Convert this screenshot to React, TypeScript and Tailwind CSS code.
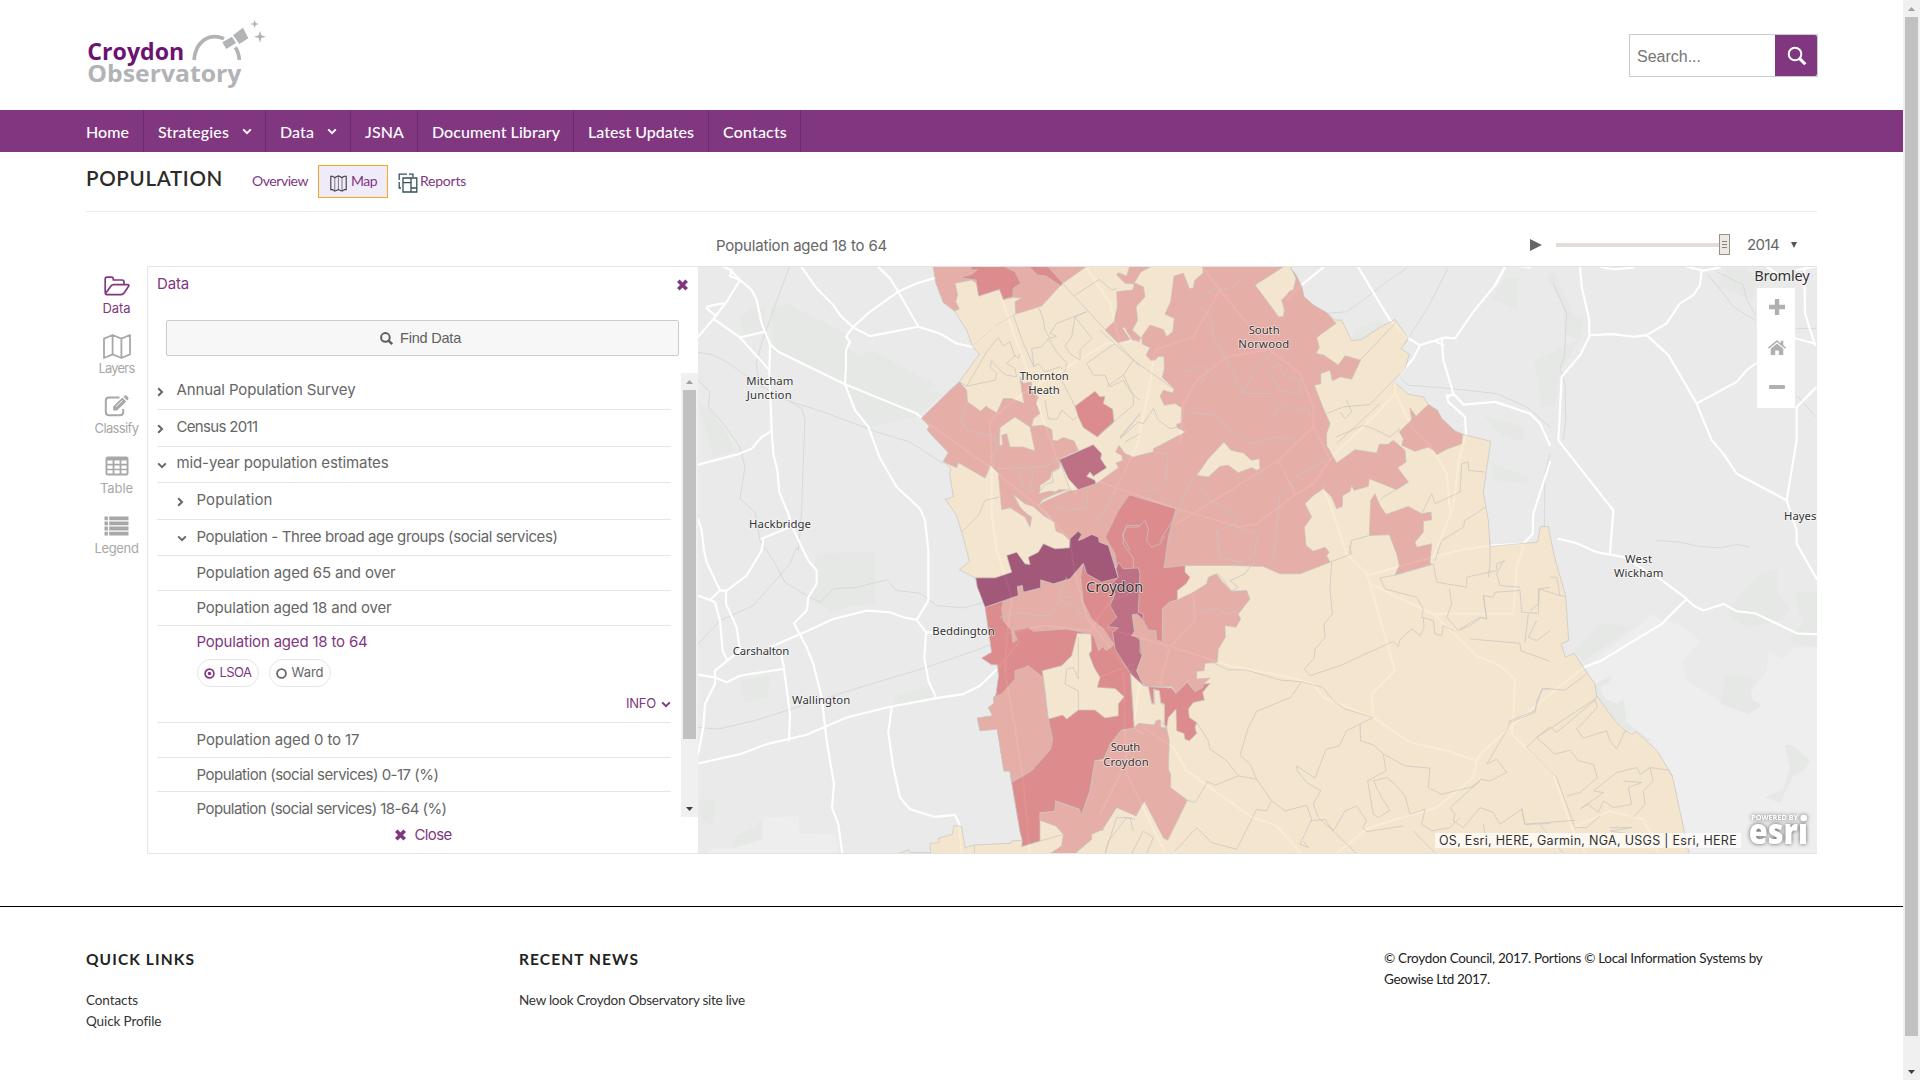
import React, { useLayoutEffect, useRef, useState } from "react";

/* Text set to a fixed measure: the tracking is computed from the natural width. */
function Fit({ w, className = "", children }: { w: number; className?: string; children: string }) {
  const ref = useRef<HTMLSpanElement>(null);
  const [ls, setLs] = useState(0);
  useLayoutEffect(() => {
    const el = ref.current;
    if (!el) return;
    const natural = el.getBoundingClientRect().width - ls * children.length;
    setLs((w - natural) / children.length);
  }, []);
  return (
    <span ref={ref} className={`inline-block whitespace-nowrap ${className}`} style={{ letterSpacing: `${ls}px` }}>
      {children}
    </span>
  );
}

/* ---------- map geometry ---------- */
/* Each path is a list of runs "tile x,y x,y ..." joined by "|"; tiles have their own origin. */
const ORIGIN: Record<string, [number, number]> = {
  "4": [4200, 0],
  "5": [2070, 660],
  "6": [3300, 780],
  "7": [2070, 1620],
  "8": [3300, 1620],
  "9": [4380, 1620],
};

function toPath(src: string, close: boolean) {
  const pts: string[] = [];
  src.split("|").forEach((run) => {
    const parts = run.trim().split(/\s+/);
    const [ox, oy] = ORIGIN[parts[0]];
    parts.slice(1).forEach((p) => {
      const [x, y] = p.split(",").map(Number);
      pts.push(`${x + ox} ${y + oy}`);
    });
  });
  return "M" + pts.join("L") + (close ? "Z" : "");
}

const PALE = "#eeeeee";
const PARK = "#e5e8e4";
const CREAM = "#f8e4c4";
const LIGHT = "#e4978c";
const MID = "#d86868";
const PLUM = "#ae435e";
const DARK = "#86214f";

const ground: [string, string][] = [
  [PALE, "9 375,378 580,220 600,240 660,250 720,300 670,360 680,420 780,480 870,460 920,390 925,330 965,355 1005,320 1080,320 1080,950 690,950 637,705 500,570"],
  [PALE, "7 24,960 70,920 135,922 215,895 220,830 325,825 330,878 435,880 450,960"],
  [PARK, "5 245,265 290,250 430,320 465,340 468,380 510,410 545,390 740,495 720,510 760,520 680,590 530,622 465,495 250,390"],
  [PARK, "5 150,290 190,262 225,265 225,310 215,335 160,345"],
  [PARK, "5 24,545 60,570 90,610 115,650 135,690 70,710"],
  [PARK, "7 375,60 385,38 555,33 555,190 480,195 430,215 360,180 375,120"],
  [PARK, "7 150,420 240,405 230,470 165,485"],
  [PARK, "7 610,492 620,465 730,435 730,478"],
  [PARK, "7 24,775 75,775 75,820 65,850 40,840"],
  [PARK, "7 135,885 190,860 215,835 218,895 130,920"],
  [PARK, "9 800,220 810,195 900,100 950,85 950,150 990,205 960,240 860,262"],
  [PARK, "9 1005,155 1080,155 1080,320 985,300 1030,250 1010,190"],
  [PARK, "9 795,405 865,405 890,420 872,445 875,475 905,495 865,520 780,490"],
  [PARK, "9 345,330 420,247 510,258 490,280 370,360"],
  [PARK, "9 975,612 1000,615 1050,660 1030,690 1000,705 960,785 915,770 970,745 990,680 980,640"],
  [PARK, "9 410,465 405,430 455,405 450,425 420,440 430,470 470,490 490,475 500,545 575,600 560,600 528,573 496,570"],
  [PARK, "4 275,895 320,830 355,835 350,930"],
  [PARK, "4 402,1080 540,1020 482,1110 465,1215 420,1220 418,1160"],
  [PARK, "4 440,830 460,810 520,945 550,950 545,1020 495,1000 490,920"],
  [PARK, "4 950,860 980,805 1040,805 1067,845 1060,900"],
  [PARK, "6 755,240 760,210 830,180 860,190 800,235"],
  [PARK, "6 1155,470 1240,490 1270,530 1200,525"],
  [PARK, "6 1175,610 1290,650 1285,670 1185,660"],
  [PARK, "4 255,1245 300,1260 370,1280 375,1320 340,1320"],
];

const rails: string[] = [
  "5 298,141 250,270 215,370 198,430 205,470",
  "5 24,397 65,403 110,425 200,490 290,540 400,575 560,635 660,665 760,730",
  "5 300,545 335,565 345,600 340,720 335,870 325,990|7 320,20 300,70 190,195 90,240 24,310",
  "5 24,480 60,515 55,560 100,610 150,680 165,740 150,835 195,875 210,960|7 250,60 285,125 350,165 390,185 430,145 500,140 590,118 620,150 690,158 740,195 820,202 885,185",
  "7 24,560 85,565 200,538 350,490 500,443 700,383 840,335 910,310",
  "6 1045,22 985,140 915,250",
  "6 680,160 740,155 790,120 860,65 920,25",
  "6 900,350 925,375 1050,385 1190,400 1280,440 1350,500",
  "6 1350,580 1335,640 1333,800",
  "4 460,850 500,940 493,1070 480,1105 495,1150 497,1260 490,1320",
  "4 920,820 970,880 1000,920 1067,962",
  "4 950,815 1030,855 1040,900 1067,945",
  "4 1190,1185 1247,1250",
  "4 1190,985 1247,985",
  "9 590,0 660,5 720,18 780,22 830,12 870,20",
];

const roads: string[] = [
  "5 24,350 70,297 110,245 150,180 120,168 125,150 85,135",
  "5 120,150 150,180 185,210 200,240 215,310 240,372 265,395 465,492 680,580 718,612 900,740 1060,870 1140,960",
  "5 240,372 238,455 245,630 250,700 262,750 268,815 295,880 300,905 340,990|7 355,60 380,90 380,130 355,170 350,210 312,248 350,320 370,370 395,470 410,600 432,730 426,800 445,850 458,945",
  "5 24,733 140,703 185,685 215,650 245,632",
  "5 72,297 150,352 238,450",
  "5 100,250 55,258 50,265 75,285",
  "5 150,352 222,335",
  "5 330,135 380,205 430,255 450,285 490,322 540,348 685,320",
  "5 565,141 600,175 625,215 685,320 750,340 800,370 845,380 920,315 970,285",
  "5 740,172 680,190 625,215 540,275 490,320 468,350 480,365 468,390 468,440 465,492 495,570 535,620 568,710 620,800 690,865 705,900 715,990|7 715,180 680,238 708,275 703,350 715,420 738,470",
  "5 24,895 35,930 42,990|7 50,65 90,150 110,150 170,105 215,30 220,0 215,-5|5 300,920 300,890",
  "5 930,215 950,280 985,380 1020,470 1060,600 1110,740 1160,820",
  "5 900,600 905,740 905,880 920,990|7 940,90 965,170 950,300 945,400 975,560 1000,720 1020,945",
  "5 1350,360 1250,370 1150,430 1000,520 900,600",
  "5 1190,145 1260,250 1290,370",
  "7 24,165 60,178 90,150",
  "7 60,178 75,185 90,240 98,330 112,360 75,390 75,430 45,490 40,560 24,640",
  "7 108,152 108,190 140,260 150,330 112,360",
  "7 240,320 350,272 430,235 530,210 600,215 640,230 680,238",
  "7 24,402 75,410 110,425 150,405 278,385",
  "7 270,330 280,370 300,520 297,598",
  "7 24,668 150,640 230,610 350,582 470,530 600,498 740,472 820,460 870,435 922,385 990,300",
  "7 605,500 595,575 610,680 630,770 660,805 735,828 795,822 808,850 815,945",
  "7 708,275 760,275",
  "7 1140,0 1155,100 1190,230 1290,360 1350,420|8 100,560 130,580",
  "7 945,280 1060,255 1200,270 1260,180 1350,150",
  "6 560,120 605,75 670,22",
  "6 775,22 870,180 925,235 960,255 1035,232 1065,235 1120,155 1190,70 1215,22",
  "6 960,255 940,295 885,360 885,400 840,450 700,585 640,670 590,700 470,790 420,800 230,745 0,665",
  "6 1005,243 1030,255",
  "6 1025,235 1030,300 1060,400 1090,433 1185,425 1290,460 1320,490 1350,555",
  "6 1060,405 1040,405 1045,425 1095,470 1098,520 1075,610 1060,740 1000,890",
  "6 885,395 935,500 990,555 1040,640 1050,750",
  "6 1350,605 1300,760 1298,820 1270,850 1170,855 1100,865 1000,890 800,945",
  "6 310,25 360,90 450,200 510,270 600,340 640,440 640,500 690,595",
  "6 360,90 280,230 165,270 150,370 110,560 40,700",
  "6 500,270 380,290 290,360 250,430 240,550",
  "6 640,500 535,600 390,690 230,790",
  "6 535,600 585,700",
  "6 670,680 700,760 740,880|8 800,100 810,130 885,390 815,460 820,530 930,605 1040,630 1130,660 1140,640 1230,560 1350,460|9 375,378 420,362 605,250 680,175",
  "8 1130,660 1120,710 1010,800 870,840 800,865 700,945",
  "8 810,130 1000,220 1130,345 1200,375 1245,415 1240,530 1235,580 1350,690|9 280,700 335,860 380,945",
  "8 1000,220 1240,220 1250,80 1270,20",
  "8 0,260 100,285 280,340 400,378 550,405 640,430 670,470 820,530",
  "8 130,560 220,620 260,690 330,740 450,825 530,855 610,945",
  "8 280,165 285,240 210,320 180,430",
  "8 70,400 80,700 200,945",
  "8 0,820 60,700",
  "8 0,410 100,370",
  "9 335,860 450,810 550,835 600,945",
  "4 315,800 285,855",
  "4 340,797 390,802",
  "4 540,800 545,860 568,960 568,1010 540,1065 485,1130 475,1320|9 460,-90 450,40",
  "4 570,1005 640,1002 700,1010 740,1005 800,970 840,910 880,885 900,855 905,810",
  "4 600,800 640,808 700,803",
  "4 860,800 910,812 960,802",
  "4 740,1005 805,1065 890,1210 935,1320|9 790,-260 830,-200 980,-120 1010,-30 1010,10 1070,115",
  "4 890,1210 1010,1145 1040,1110 1067,1090",
  "4 1247,1163 1190,1220 1190,1320|9 1000,-240 980,-120",
  "4 1100,800 1130,820",
  "4 1213,800 1215,940 1245,1035",
  "4 1188,1015 1245,1030",
  "4 1190,810 1247,800",
  "4 160,1180 145,1190",
  "9 295,-5 350,8 410,35 490,50 600,115 680,175 700,195 730,210 790,190 830,212 885,218 1010,278 1080,282",
];

const borough =
  "5 730,130 730,141 738,190 760,247 795,275 830,330 847,378 868,402 808,485 775,515 780,518 694,594 718,617 712,630 775,697 760,724 783,745 779,760 790,829 766,837 800,885 815,935 830,990|7 838,63 808,88 857,112 862,140 885,185 905,335 875,352 905,372 922,372 926,405 918,463 911,470 912,488 895,500 908,525 862,532 870,570 922,565 942,690 960,690 990,872 997,898 965,900 963,907 853,912 825,920 815,857 792,853 787,880 745,892 747,905 720,907 722,935 660,935 657,926 625,938 600,970|9 700,970 688,940 637,705 593,632 560,600 528,573 515,580 496,570 465,540 410,465 405,430 380,395 343,338 316,350 304,310 326,300 317,165 285,55 272,-5|6 1345,798 1322,798 1312,845 1170,858 1165,780 1150,695 1172,543 1088,522 1065,512 1025,475 1012,450 985,433 970,410 925,402 883,365 915,325 928,282 903,266 925,235 885,178 835,205 785,238 755,242 725,180 705,180 680,158 640,135 612,110 605,80 588,45 570,22 570,0";

const areas: [string, string][] = [
  [CREAM, borough],
  [LIGHT, "5 730,130 730,141 738,190 760,247 795,273 808,266 797,245 803,225 795,190 845,180 860,190 866,228 928,208 940,238 968,232 995,234 975,245 977,282 1055,258 1115,192 1187,141 1200,130"],
  [MID, "5 838,130 845,150 862,150 845,163 810,173 858,180 866,228 928,208 940,238 968,230 970,205 992,190 975,155 945,141 945,130"],
  [MID, "5 1008,130 1042,165 1068,168 1113,198 1117,188 1070,135"],
  [LIGHT, "6 152,12 150,22 123,35 103,68 130,80 135,110 108,140 113,180 97,210 122,232 118,245 97,240 72,200 68,205 90,238 55,248 15,210 42,185 52,140 50,95 75,92 98,90 103,72 75,70 50,45 55,38 80,48 88,22 90,12"],
  [LIGHT, "6 305,12 310,38 283,62 280,85 268,85 250,40 222,48 212,125 195,162 223,175 218,215 200,230 190,208 150,195 125,230 127,252 150,262 138,285 152,300 165,300 175,288 192,290 193,325 187,352 222,385 218,398 190,390 180,408 193,435 225,430 245,442 243,488 230,492 232,503 257,515 160,565 160,575 130,582 100,590 75,580 57,555 47,575 65,585 68,600 48,608 55,622 0,662|5 1217,790 1165,808 1135,812 1060,845 1045,855 1092,905 1098,932 1118,940 1140,962|7 1140,60 1300,80|6 88,703 228,745 205,830 192,922 255,915 400,915 490,918 540,940 600,940 690,905 680,885 688,875 675,860 640,872 618,855 613,800 635,770 615,730 640,705 670,685 695,710 710,745 727,738 728,705 750,693 755,675 762,690 805,678 808,655 890,688 925,665 893,622 918,605 915,570 880,540 865,552 838,552 830,578 765,568 710,608 680,555 680,520 690,490 668,440 643,375 663,370 662,340 690,330 697,362 722,350 755,357 782,300 735,287 715,315 672,285 648,280 658,262 650,232 708,190 680,158 640,135 612,110 605,80 588,45 570,22 570,12"],
  [CREAM, "6 572,12 548,22 465,75 525,155 535,170 550,170 553,150 545,120 560,105 570,92 580,90 588,55 572,22"],
  [CREAM, "6 372,545 393,570 430,578 455,600 478,595 480,625 470,630 455,622 415,637 385,615 360,618 325,650 290,645 325,595"],
  [LIGHT, "6 885,943 898,915 890,880 868,823 808,825 812,720 825,700 840,735 858,762 925,738 965,760 993,755 995,778 970,782 970,815 945,845 950,860 995,850 990,905 995,912"],
  [LIGHT, "6 985,433 1012,450 1025,475 1065,512 1088,522 1085,550 1040,567 1010,583 1003,573 985,560 945,573 905,555 910,535 898,515 935,478 930,443 948,468"],
  [LIGHT, "5 808,485 830,510 833,545 872,573 888,558 920,578 940,535 965,535 1003,550 995,510 990,470 1000,490 1025,485 1025,510 1045,530 1038,550 1050,580 1030,595 1025,618 1060,615 1085,628 1088,660 1100,662 1120,652 1152,662 1165,690 1110,715 1110,740 1085,755 1080,775 1050,795 1050,818 1110,800 1130,808 1060,835 1045,855 1092,905 1060,885 1030,858 1005,850 970,822 990,860 1010,880 1025,890 1020,920 1005,890 960,862 935,868 925,760 902,735 885,773 805,727 800,742 760,724 775,697 712,630 718,617 694,594 775,515"],
  [CREAM, "5 930,622 975,590 1020,620 1035,692 1000,680 960,680 950,640 935,645 938,675 928,675"],
  [CREAM, "5 1045,820 1065,792 1090,785 1085,758 1115,740 1140,808 1105,808 1085,825 1060,838 1100,815 1080,812"],
  [MID, "5 1155,558 1215,513 1230,530 1245,528 1240,550 1268,567 1272,605 1222,650 1180,622 1165,590"],
  [PLUM, "5 1108,718 1210,673 1235,700 1232,715 1250,742 1210,768 1200,755 1190,768 1215,780 1217,790 1165,808 1135,775"],
  [MID, "6 88,703 228,745 205,830 192,922 255,915|8 255,80 255,95 270,110 258,130 232,150 232,178 208,185 188,205 187,307 125,345 130,435 92,400 103,563 65,568|7 1270,600 1240,655 1215,660 1200,750 1175,822 1165,825 1168,805 1097,780 1095,812 1050,815 1050,900 995,917 997,898 990,872 965,725 960,690 942,690 918,540 911,470 918,463 926,405 922,372 905,372 875,352 905,335 885,200 985,165 1140,115 1180,68 1285,112 1275,40 1246,-10 1285,-90"],
  [LIGHT, "7 911,470 935,460 975,415 975,390 1000,382 1015,375 1060,410 1065,465 1075,535 1088,595 1082,625 1025,690 965,725 960,690 942,690 922,565 870,570 862,532 908,525 895,500 912,488"],
  [LIGHT, "7 935,205 940,183 985,165 982,138 997,135 1000,155 1052,142 1052,118 1090,130 1140,115 1178,72 1172,110 1180,185 1205,235 1240,265 1272,312 1248,330 1240,318 1225,330 1215,295 1205,280 1130,265 1030,272 1015,260 970,270 982,298 968,305 965,270 940,240"],
  [CREAM, "7 1162,278 1203,280 1205,330 1197,340 1212,380 1230,410 1222,440 1275,443 1302,468 1285,490 1285,525 1245,532 1215,508 1165,508 1130,535 1118,523 1075,535 1065,450 1057,390 1115,375 1145,345"],
  [DARK, "7 857,112 915,112 965,95 950,45 980,35 1005,70 1020,72 1015,50 1045,35 1060,10 1095,25 1138,22 1140,-5 1165,-28 1175,-18 1165,0 1180,-5 1205,-18 1225,-10 1228,5 1255,15 1285,112 1235,125 1190,100 1180,68 1140,115 1090,130 1052,118 1052,142 1000,155 997,135 982,138 985,165 885,200 862,140"],
  [PLUM, "8 55,65 70,85 115,82 120,100 115,215 130,220 128,238 97,225 105,285 120,300 120,335 127,345 110,390 130,435 92,400 45,325 38,275 55,262 22,258 50,230 30,195 45,160 35,130 55,110 48,85"],
  [LIGHT, "8 97,222 112,220 130,240 145,268 168,270 170,298 187,303 187,205 208,185 232,178 280,155 320,130 325,110 350,100 365,122 395,152 440,150 450,175 415,220 422,235 408,260 375,255 376,290 355,325 352,365 315,368 312,390 290,392 290,415 330,412 310,430 308,440 285,453 262,422 230,458 215,438 135,437 110,390 127,345 120,290 95,285 105,270"],
  [MID, "8 145,438 215,442 228,458 262,424 285,453 308,440 310,430 330,428 308,455 313,478 280,485 265,505 268,530 290,545 285,560 290,578 268,600 255,595 252,578 230,570 228,505 205,530 200,560 193,550 193,490 182,485 178,450 160,445 162,490 155,485"],
  [CREAM, "8 92,400 130,435 145,438 155,490 165,490 162,447 178,450 182,488 193,493 193,550 200,562 180,537 163,553 115,548 110,560 103,555"],
  [LIGHT, "8 65,568 100,563 115,548 163,553 168,540 180,537 183,560 200,562 208,600 205,685 212,700 212,740 262,778 203,898 190,890 133,780 108,825 50,800 5,870|7 1240,865 1205,880 1205,895 1155,938 1150,950 1070,950 1080,938 1115,915 1120,880 1097,855 1050,838 1050,815 1095,812 1097,780 1168,805 1175,822 1200,750 1215,660 1240,660 1260,610 1290,572"],
];

const bounds: string[] = [
  "5 847,378 920,315 970,285 975,282",
  "5 970,285 1000,370 1032,440",
  "5 808,485 830,498 915,480 920,460 900,440 905,422 935,455 950,465 980,470 975,445 950,430 975,405 985,415 990,400",
  "5 830,498 890,395 925,352 940,378 960,365 975,410",
  "5 1048,265 1060,300 1065,330 1080,355 1100,348 1080,340 1100,310 1190,275 1155,290 1205,355 1170,390 1170,420 1140,400 1125,378 1145,350 1155,290",
  "5 1075,355 1055,380 1025,385 1032,440 1045,430 1065,455 1110,440 1125,455 1130,430 1100,395 1075,355",
  "5 1117,190 1280,365 1350,440",
  "5 1155,225 1228,178 1265,210 1280,205",
  "5 1275,370 1190,430 1210,465 1245,465 1260,500 1300,480 1325,520 1350,540",
  "5 1065,540 1075,595 1100,598 1115,570 1150,600 1160,590",
  "5 1115,480 1155,558",
  "5 1290,650 1350,580 1290,655",
  "5 833,545 812,600 830,630 915,650 920,690 900,715",
  "5 985,745 1000,800 1020,815 1030,750 990,745",
  "5 925,745 1060,740 1108,720",
  "5 815,935 865,885 885,840 928,830",
  "5 1090,855 1135,870 1190,860 1195,810",
  "5 1220,905 1250,860 1280,810",
  "5 1350,915 1310,915 1297,945 1320,990",
  "7 930,230 1000,215 1040,225 1075,225 1110,180 1155,195 1175,225",
  "7 1130,110 1105,165 1140,170",
  "7 1165,290 1165,350 1165,415 1150,380 1130,385 1125,430 1165,450 1165,510",
  "7 1050,900 1120,880",
  "7 1245,938 1255,900 1310,830 1335,835",
  "7 853,912 853,945",
  "6 0,210 60,265 100,300 220,385",
  "6 20,380 70,345 100,300",
  "6 70,345 100,405 100,435 0,520",
  "6 60,535 115,485 130,490 160,445 175,480 210,505 235,500",
  "6 75,545 120,520",
  "6 285,130 330,170 345,240 380,300 430,400 515,400",
  "6 345,85 285,130",
  "6 360,90 400,80 430,50",
  "6 240,340 310,315 330,340 290,380",
  "6 500,330 540,310 550,345 600,360 600,400 540,390 510,340",
  "6 430,400 460,340 525,270",
  "6 515,480 540,440 560,430 585,450 625,445 630,470",
  "6 265,455 350,465 380,500 450,550 535,530 580,540",
  "6 160,575 205,580 195,660 170,690 130,690",
  "6 280,650 230,760 180,840",
  "6 290,670 330,720 380,740 410,790 350,810 360,890 420,905 465,880 470,820 410,800",
  "6 520,905 540,700 600,640 690,595",
  "6 70,820 80,800 115,800 135,780 145,805 140,840 155,860 180,850 195,825",
  "6 100,922 100,895 70,850 70,820",
  "6 780,300 885,190",
  "6 680,460 730,440 810,433 900,340",
  "6 710,550 840,430",
  "6 740,420 755,455 735,475 720,455",
  "6 708,530 790,495 830,510 870,530 900,505",
  "6 925,665 850,710 840,720",
  "6 965,760 995,700 1005,730 1080,695 1085,610 1105,605 1105,630 1155,635",
  "6 1155,740 1135,755 1095,780 1090,800 1025,840 1005,900",
  "6 748,880 755,840 808,825",
  "8 690,65 755,40 748,15",
  "8 355,100 395,152 415,140 390,120 435,100 465,60",
  "8 270,190 300,215 350,205 380,220 415,212",
  "8 695,65 690,145 697,220 672,250 675,290 645,325 643,352 613,385 630,405",
  "8 340,367 385,387 440,388 540,418 605,423 668,440 700,480 735,505 820,530",
  "8 605,423 572,470 470,512 445,560 420,643 450,670 470,715 515,780 555,810 620,793 635,835",
  "8 630,405 720,375 880,302 895,318 900,298 935,265 960,285 972,262 970,230",
  "8 840,112 855,145 950,170 970,205 965,230 1000,240 1005,280 1025,285 1030,255 1060,270",
  "8 840,112 890,103 1000,70 1010,125 1100,140 1100,110 1190,90 1190,70 1215,60",
  "8 1048,145 1055,190 1040,230 1075,270 1110,255 1145,230 1160,235 1150,165 1180,170 1185,155 1260,150",
  "8 1260,150 1265,215 1315,218 1318,145 1350,140",
  "8 1110,295 1260,308 1262,330 1350,362",
  "8 1210,60 1190,100 1200,135 1260,140",
  "8 1170,0 1170,70 1165,110",
  "8 1275,305 1280,260 1285,220",
  "8 1310,240 1285,290 1310,300 1350,270",
  "8 820,530 740,570 718,615 678,625 645,712 590,675 592,690 620,725 663,750 650,770 640,790 655,830 700,870 735,810 770,795 800,840 788,860 800,872 910,855",
  "8 780,550 782,600 820,612 850,640 858,690 803,720 820,820 835,830 870,808 845,770 820,720 860,710 885,730 915,765 930,820 975,805",
  "8 850,640 915,675 990,682 985,740 1025,760 1115,738 1140,720",
  "8 290,545 325,600 330,625 380,660 415,705 470,715",
  "8 415,705 345,733 323,722 285,785 262,778",
  "8 225,930 290,860 335,905 410,925 470,805 500,810 512,782",
  "8 15,938 50,830 90,830 100,870",
  "8 95,938 130,870 160,890 140,938",
  "8 635,835 600,910 625,920 610,900",
  "8 630,840 675,835 700,870 770,938",
  "8 1350,445 1325,445 1305,510 1230,540 1225,560 1160,670 1190,655 1220,695 1170,720 1140,715",
  "8 1140,720 1050,800 1065,820 1060,840 1090,860 1140,800 1180,815 1200,850 1265,805 1275,850 1350,848",
  "8 975,805 965,850 995,870 1050,860 1080,830",
  "8 940,870 1005,935",
  "8 1150,850 1155,880 1190,885",
  "9 380,400 315,448 250,443 230,480 225,515 150,545",
  "9 405,475 230,590 200,620 290,710 345,860",
  "9 230,590 285,640 330,628 355,660 400,670 412,710 360,755 320,765",
  "9 410,465 405,478 412,500 350,565 370,592 440,570 450,600 470,625 495,570",
  "9 230,590 270,558 290,575 405,478",
  "9 185,800 195,850 345,838",
  "9 360,805 430,755 400,750 470,695 530,680 540,700 570,680 625,688 637,705",
  "9 365,800 385,790 415,815 430,780 460,800 515,790 505,740 545,725 490,720",
  "9 570,680 580,720 550,750 555,790 520,830",
  "9 345,860 380,860 420,825",
  "9 240,850 310,938",
  "9 450,860 515,860 450,870 515,880",
  "9 300,165 317,168",
  "9 270,110 290,110 300,165 235,145 235,190 210,210",
  "9 0,265 60,230 80,235 70,165",
];

type Label = { x: number; y: number; w: number; s?: number; t: string };
const labels: Label[] = [
  { x: 2239, y: 1155, w: 141, t: "Mitcham" },
  { x: 2240, y: 1195, w: 135, t: "Junction" },
  { x: 2247, y: 1583, w: 186, t: "Hackbridge" },
  { x: 3059, y: 1140, w: 147, t: "Thornton" },
  { x: 3085, y: 1181, w: 94, t: "Heath" },
  { x: 3746, y: 1001, w: 93, t: "South" },
  { x: 3715, y: 1043, w: 153, t: "Norwood" },
  { x: 2198, y: 1964, w: 170, t: "Carshalton" },
  { x: 2797, y: 1904, w: 187, t: "Beddington" },
  { x: 2376, y: 2111, w: 175, t: "Wallington" },
  { x: 3258, y: 1775, w: 172, s: 44, t: "Croydon" },
  { x: 3332, y: 2252, w: 89, t: "South" },
  { x: 3310, y: 2294, w: 136, t: "Croydon" },
  { x: 4875, y: 1688, w: 81, t: "West" },
  { x: 4842, y: 1730, w: 148, t: "Wickham" },
  { x: 5352, y: 1560, w: 97, t: "Hayes" },
  { x: 5263, y: 843, w: 166, s: 44, t: "Bromley" },
];

function MapView() {
  return (
    <svg className="block h-full w-full" viewBox="2094 801 3357 1755" preserveAspectRatio="none" fontFamily='"Noto Sans", sans-serif'>
      <rect x="2094" y="801" width="3357" height="1755" fill="#eaeaea" />
      {ground.map(([f, d], i) => (
        <path key={i} d={toPath(d, true)} fill={f} />
      ))}
      <g fill="none" stroke="#d4d5d7" strokeWidth="2.5" strokeLinejoin="round">
        {rails.map((d, i) => (
          <path key={i} d={toPath(d, false)} />
        ))}
      </g>
      <g fill="none" stroke="#ffffff" strokeWidth="6.5" strokeLinejoin="round" strokeLinecap="round">
        {roads.map((d, i) => (
          <path key={i} d={toPath(d, false)} />
        ))}
      </g>
      <g opacity="0.72" stroke="#bcb8b4" strokeWidth="2.2" strokeLinejoin="round">
        {areas.map(([f, d], i) => (
          <path key={i} d={toPath(d, true)} fill={f} />
        ))}
        <g fill="none" strokeWidth="2.2">
          {bounds.map((d, i) => (
            <path key={i} d={toPath(d, false)} />
          ))}
        </g>
      </g>
      <g fill="#333333" stroke="#ffffff" strokeOpacity="0.6" strokeWidth="5" strokeLinejoin="round" paintOrder="stroke">
        {labels.map((l, i) => (
          <text key={i} x={l.x} y={l.y} fontSize={l.s ?? 34} textLength={l.w}>
            {l.t}
          </text>
        ))}
      </g>
    </svg>
  );
}

/* ---------- icons ---------- */
function Chevron({ dir, className = "" }: { dir: "right" | "down"; className?: string }) {
  return dir === "right" ? (
    <svg className={className} width="7" height="10" viewBox="0 0 7 10" fill="none" stroke="currentColor" strokeWidth="2">
      <path d="M1.2 1.2 5 5 1.2 8.8" />
    </svg>
  ) : (
    <svg className={className} width="10" height="7" viewBox="0 0 10 7" fill="none" stroke="currentColor" strokeWidth="2">
      <path d="M1.2 1.4 5 5.2 8.8 1.4" />
    </svg>
  );
}

function Cross({ className = "" }: { className?: string }) {
  return (
    <svg className={className} width="11" height="12" viewBox="0 0 11 12" fill="none" stroke="currentColor" strokeWidth="3.6">
      <path d="M1.3 1.8 9.7 10.2M9.7 1.8 1.3 10.2" />
    </svg>
  );
}

function FolderIcon() {
  return (
    <svg width="26" height="20" viewBox="0 0 26 20" fill="none" stroke="currentColor" strokeWidth="1.7" strokeLinejoin="round">
      <path d="M1.2 16.5V3.2Q1.2 1.2 3.2 1.2H7.5Q9.3 1.2 9.3 3V4H18Q20 4 20 6V8.6" />
      <path d="M1.5 17.6 6.6 10.4Q7.8 8.7 9.8 8.7H24Q25.4 8.9 24.6 10.3L20.2 16.8Q19 18.6 17 18.6H3Q1.2 18.6 1.2 16.5" />
    </svg>
  );
}

function MapIcon() {
  return (
    <svg width="28" height="25" viewBox="0 0 28 25" fill="none" stroke="currentColor" strokeWidth="1.8" strokeLinejoin="round">
      <path d="M1 4.6 9.6 1 18.4 4.6 27 1V20.4L18.4 24 9.6 20.4 1 24ZM9.6 1V20.4M18.4 4.6V24" />
    </svg>
  );
}

function EditIcon() {
  return (
    <svg width="26" height="22" viewBox="0 0 26 22" fill="none" stroke="currentColor">
      <path d="M15.5 2.4H5Q1.8 2.4 1.8 5.6V17Q1.8 20.2 5 20.2H16Q19.2 20.2 19.2 17V14" strokeWidth="2" />
      <path d="M9.2 11.6 18.4 2.6 22.2 6.4 13 15.4H9.2Z" fill="currentColor" stroke="none" />
      <path d="M19.4 1.7 20.6.6Q21.6-.2 22.6.8L24 2.2Q25 3.2 24.2 4.2L23.2 5.4Z" fill="currentColor" stroke="none" />
      <path d="M12 11.8 18.6 5.3" stroke="#fff" strokeWidth=".9" />
    </svg>
  );
}

function TableIcon() {
  return (
    <svg width="24" height="20" viewBox="0 0 24 20">
      <rect x=".5" y=".5" width="23" height="19" rx="2.2" fill="currentColor" />
      <g fill="#fff">
        <path d="M2.4 4.6h5.2v3.2H2.4zM9.4 4.6h5.2v3.2H9.4zM16.4 4.6h5.2v3.2h-5.2zM2.4 9.4h5.2v3.3H2.4zM9.4 9.4h5.2v3.3H9.4zM16.4 9.4h5.2v3.3h-5.2zM2.4 14.3h5.2v3.3H2.4zM9.4 14.3h5.2v3.3H9.4zM16.4 14.3h5.2v3.3h-5.2z" />
      </g>
    </svg>
  );
}

function ListIcon() {
  return (
    <svg width="25" height="20" viewBox="0 0 25 20" fill="currentColor">
      <path d="M.5.4h3.4v3.8H.5zM5.2.4h19.3v3.8H5.2zM.5 5.5h3.4v3.8H.5zM5.2 5.5h19.3v3.8H5.2zM.5 10.6h3.4v3.8H.5zM5.2 10.6h19.3v3.8H5.2zM.5 15.7h3.4v3.8H.5zM5.2 15.7h19.3v3.8H5.2z" />
    </svg>
  );
}

function Logo() {
  return (
    <svg className="block" width="190" height="80" viewBox="15 0 570 240" fontFamily='"Open Sans", sans-serif'>
      <text x="22" y="149" fontSize="70" fontWeight="700" fill="#6d1270" textLength="291" lengthAdjust="spacingAndGlyphs">Croydon</text>
      <text x="22" y="216" fontSize="72" fontWeight="700" fill="#b1b3b6" textLength="462" lengthAdjust="spacingAndGlyphs">Observatory</text>
      <g fill="none" stroke="#b1b3b6" strokeWidth="11">
        <path d="M342 150C346 98 385 66 432 86" />
        <path d="M466 112C473 122 477 134 478 150" />
      </g>
      <g fill="#b1b3b6">
        <path d="M427 97 456 80 468 99 439 117ZM459 76 489 53 505 85 478 102Z" />
        <path d="M524 29 527 39 537 42 527 45 524 55 521 45 511 42 521 39ZM540 62 544 76 558 80 544 84 540 98 536 84 522 80 536 76Z" />
      </g>
    </svg>
  );
}

/* ---------- page parts ---------- */
function Header() {
  return (
    <header className="flex h-[110px] items-start justify-between pl-[85px] pr-[86px]">
      <div className="pt-[10px]">
        <Logo />
      </div>
      <div className="mr-[-1px] mt-[34px] flex h-[43px] w-[189px] border border-[#cccccc] bg-white">
        <div className="flex flex-1 items-center pl-[7px] pt-[3px] font-['Liberation_Sans',sans-serif] text-[16px] text-[#757575]">
          <Fit w={64}>Search...</Fit>
        </div>
        <div className="flex w-[42px] items-center justify-center rounded-r-[2px] bg-[#803780]">
          <svg className="ml-[2px]" width="20" height="20" viewBox="0 0 20 20" fill="none" stroke="#fff">
            <circle cx="8" cy="8" r="6.3" strokeWidth="2" />
            <path d="M12.4 12.4 18.3 18.3" strokeWidth="3" />
          </svg>
        </div>
      </div>
    </header>
  );
}

function NavItem({ w, tw, arrow, first, children }: { w: string; tw: number; arrow?: boolean; first?: boolean; children: string }) {
  return (
    <div className={`flex items-center border-r border-[#6a2c6b] ${first ? "" : "pl-[14px]"} ${w}`}>
      <Fit w={tw} className="relative top-px">{children}</Fit>
      {arrow && <Chevron dir="down" className="ml-[13px] mt-px" />}
    </div>
  );
}

function Nav() {
  return (
    <nav className="flex h-[42px] bg-[#803780] pl-[86px] font-['Lato',sans-serif] text-[16px] font-medium text-white">
      <NavItem w="w-[58px]" tw={43} first>Home</NavItem>
      <NavItem w="w-[122px]" tw={71} arrow>Strategies</NavItem>
      <NavItem w="w-[85px]" tw={34} arrow>Data</NavItem>
      <NavItem w="w-[67px]" tw={39}>JSNA</NavItem>
      <NavItem w="w-[156px]" tw={128}>Document Library</NavItem>
      <NavItem w="w-[135px]" tw={106}>Latest Updates</NavItem>
      <NavItem w="w-[92px]" tw={64}>Contacts</NavItem>
    </nav>
  );
}

function TitleBar() {
  return (
    <div className="ml-[86px] mr-[86px] flex h-[60px] border-b border-[#ececec] font-['Lato',sans-serif]">
      <h1 className="mt-[11px] w-[166px] text-[20.5px] font-semibold leading-[30px] text-[#2b2b2b]">
        <Fit w={137}>POPULATION</Fit>
      </h1>
      <div className="mt-[13px] flex h-[33px] items-center text-[14px] text-[#803780]">
        <div className="mt-[-2px] w-[66px]"><Fit w={56}>Overview</Fit></div>
        <div className="flex h-[33px] w-[70px] items-center border border-[#f5a81c] bg-[#efebf9] pl-[11px]">
          <svg className="mt-[3px]" width="17" height="17" viewBox="0 0 17 17" fill="none" stroke="#3a3a44" strokeWidth="1.1">
            <path d="M.8 1.2 2.5 1.2 4.8 2.6 8.4.8 12 2.6 14.4 1.2H16.2V14.6H14.4L12 16.2 8.4 14.6 4.8 16.2 2.5 14.6H.8Z" />
            <path d="M4.8 2.6V16M8.4 1V14.6M12 2.6V16" strokeOpacity="0.7" strokeWidth="0.9" />
          </svg>
          <span className="ml-[4px] mt-[-2px]"><Fit w={26}>Map</Fit></span>
        </div>
        <svg className="ml-[10px] mt-[3px]" width="20" height="20" viewBox="0 0 20 20" fill="none" stroke="#35505a" strokeWidth="1.3">
          <path d="M3 15H1.2V9M1.2 7V1.2H9M11 1.2H15V4" />
          <path d="M5 5H18.8V19H5ZM5 9.6H13M13 5V19M13 15H18.8" />
        </svg>
        <span className="ml-[2px] mt-[-2px]"><Fit w={46}>Reports</Fit></span>
      </div>
    </div>
  );
}

function MapHeader() {
  return (
    <div className="flex h-[54px] items-center pl-[630px] pt-[12px] text-[#666666]">
      <Fit w={171} className="mt-[2px] text-[15px]">Population aged 18 to 64</Fit>
      <div className="ml-[643px] flex items-center">
        <svg width="12" height="12" viewBox="0 0 12 12" fill="#666"><path d="M0 0 12 6 0 12Z" /></svg>
        <div className="ml-[14px] h-[4px] w-[163px] bg-[#e2ddd8]" />
        <div className="mt-[-1px] flex h-[21px] w-[11px] flex-col items-center justify-center gap-[2px] border border-[#9a9186] bg-[#ece9e4]">
          <div className="h-px w-[5px] bg-[#8a8278]" />
          <div className="h-px w-[5px] bg-[#8a8278]" />
          <div className="h-px w-[5px] bg-[#8a8278]" />
        </div>
        <Fit w={32} className="ml-[17px] text-[15px]">2014</Fit>
        <svg className="ml-[12px]" width="6" height="6" viewBox="0 0 6 6" fill="#555"><path d="M0 0H6L3 6Z" /></svg>
      </div>
    </div>
  );
}

function SideTab({ w, active, icon, children }: { w: number; active?: boolean; icon: React.ReactNode; children: string }) {
  return (
    <div className={`flex h-[60px] flex-col items-center ${active ? "text-[#803780]" : "text-[#a8a8a8]"}`}>
      <div className="flex h-[26px] items-center">{icon}</div>
      <div className="text-[13px] leading-[18px]"><Fit w={w}>{children}</Fit></div>
    </div>
  );
}

function Row({ h, tw, indent, chevron, nudge, children }: { h: string; tw: number; indent: string; chevron?: "right" | "down"; nudge?: string; children: string }) {
  return (
    <div className={`flex items-center border-b border-[#e6e6e6] ${h}`}>
      <div className={`flex ${indent} ${indent === "w-[20px]" ? "pl-[0px]" : "pl-[20px]"} pt-[2px]`}>
        {chevron && <Chevron dir={chevron} />}
      </div>
      <Fit w={tw} className={nudge ?? (chevron ? "mt-[-2px]" : "")}>{children}</Fit>
    </div>
  );
}

function DataPanel() {
  return (
    <section className="flex h-[588px] w-[551px] flex-col border border-r-0 border-[#e6e6e6] bg-white text-[15px] text-[#666666]">
      <div className="flex h-[34px] items-center justify-between pl-[9px] pr-[10px] text-[#803780]">
        <Fit w={32}>Data</Fit>
        <Cross className="mt-[2px]" />
      </div>
      <div className="ml-[18px] mt-[19px] flex h-[36px] w-[513px] shrink-0 items-center justify-center rounded-[2px] border border-[#cccccc] bg-[#f7f7f7] pr-[4px] font-['Liberation_Sans',sans-serif] text-[14.5px] text-[#606060]">
        <svg className="mr-[7px] mt-[1px]" width="13" height="13" viewBox="0 0 13 13" fill="none" stroke="currentColor">
          <circle cx="5.4" cy="5.4" r="4.3" strokeWidth="2" />
          <path d="M8.6 8.6 12.2 12.2" strokeWidth="2.4" />
        </svg>
        <Fit w={61} className="mt-px">Find Data</Fit>
      </div>
      <div className="mt-[17px] flex h-[444px] shrink-0 justify-between pl-[8.5px]">
        <div className="h-full w-[514.5px] overflow-hidden">
          <Row h="h-[37px]" tw={179} indent="w-[20px]" chevron="right">Annual Population Survey</Row>
          <Row h="h-[37px]" tw={81} indent="w-[20px]" chevron="right">Census 2011</Row>
          <Row h="h-[36px]" tw={212} indent="w-[20px]" chevron="down">mid-year population estimates</Row>
          <Row h="h-[37px]" tw={76} indent="w-[40px]" chevron="right">Population</Row>
          <Row h="h-[36px]" tw={361} indent="w-[40px]" chevron="down" nudge="mt-0">Population - Three broad age groups (social services)</Row>
          <Row h="h-[35px]" tw={199} indent="w-[40px]">Population aged 65 and over</Row>
          <Row h="h-[35px]" tw={195} indent="w-[40px]">Population aged 18 and over</Row>
          <div className="h-[97px] border-b border-[#e6e6e6] pl-[40px] text-[#803780]">
            <div className="h-[33px] pt-[5px]"><Fit w={171}>Population aged 18 to 64</Fit></div>
            <div className="flex gap-[10px] text-[13px]">
              <div className="flex h-[28px] w-[62px] items-center rounded-full border border-[#e6e6e6] pl-[6px]">
                <svg width="11" height="11" viewBox="0 0 11 11"><circle cx="5.5" cy="5.5" r="4.4" fill="none" stroke="currentColor" strokeWidth="1.7" /><circle cx="5.5" cy="5.5" r="1.8" fill="currentColor" /></svg>
                <Fit w={32} className="ml-[5px]">LSOA</Fit>
              </div>
              <div className="flex h-[28px] w-[62px] items-center rounded-full border border-[#e6e6e6] pl-[6px] text-[#666666]">
                <svg width="11" height="11" viewBox="0 0 11 11"><circle cx="5.5" cy="5.5" r="4.4" fill="none" stroke="currentColor" strokeWidth="1.8" /></svg>
                <Fit w={32} className="ml-[5px]">Ward</Fit>
              </div>
            </div>
            <div className="mt-[6px] flex items-center justify-end gap-[5px] text-[13px] leading-[20px]">
              <Fit w={30}>INFO</Fit>
              <Chevron dir="down" className="mt-[3px]" />
            </div>
          </div>
          <Row h="h-[35px]" tw={163} indent="w-[40px]">Population aged 0 to 17</Row>
          <Row h="h-[34px]" tw={242} indent="w-[40px]" nudge="mt-px">Population (social services) 0-17 (%)</Row>
          <Row h="h-[36px]" tw={250} indent="w-[40px]">Population (social services) 18-64 (%)</Row>
        </div>
        <div className="flex h-full w-[17px] flex-col items-center bg-[#f0f0f0]">
          <div className="flex h-[17px] items-center"><svg width="7" height="4" viewBox="0 0 7 4" fill="#a0a0a0"><path d="M0 4 3.5 0 7 4Z" /></svg></div>
          <div className="h-[349px] w-[13px] bg-[#c1c1c1]" />
          <div className="mt-auto flex h-[17px] items-center"><svg width="7" height="4" viewBox="0 0 7 4" fill="#404040"><path d="M0 0 3.5 4 7 0Z" /></svg></div>
        </div>
      </div>
      <div className="flex flex-1 items-center justify-center text-[#803780]">
        <Cross className="mr-[9px]" />
        <Fit w={37}>Close</Fit>
      </div>
    </section>
  );
}

function MapPane() {
  return (
    <section className="relative h-[588px] w-[1119px] border-y border-[#e2e2e2]">
      <MapView />
      <div className="absolute left-[1059px] top-[21px] flex h-[120px] w-[38px] flex-col items-center bg-white pl-px text-[#b0b0b0]">
        <svg className="mt-[11px]" width="16" height="16" viewBox="0 0 16 16" fill="currentColor"><path d="M5.8 0h4.4v5.8H16v4.4h-5.8V16H5.8v-5.8H0V5.8h5.8z" /></svg>
        <svg className="mt-[25px]" width="18" height="15" viewBox="0 0 18 15" fill="currentColor">
          <path d="M9 3.6 15.3 8.8V14.2Q15.3 15 14.5 15H10.8V10.4H7.2V15H3.5Q2.7 15 2.7 14.2V8.8Z" />
          <path d="M9 0 12.8 3.2V.8H15.3V5.2L18 7.6 17 8.7 9 2.1 1 8.7 0 7.6Z" />
        </svg>
        <svg className="mt-[30px]" width="16" height="4" viewBox="0 0 16 4" fill="currentColor"><rect width="16" height="4" rx="1" /></svg>
      </div>
      <div className="absolute left-[737px] top-[566px] flex h-[15px] w-[306px] items-center bg-white/70 pl-[4px] pt-[2px] text-[12.5px] text-[#333333]">
        <Fit w={298}>OS, Esri, HERE, Garmin, NGA, USGS | Esri, HERE</Fit>
      </div>
      <svg className="absolute left-[1049px] top-[544px] overflow-visible drop-shadow-[0_0_2px_rgba(0,0,0,0.6)]" width="64" height="38" viewBox="0 0 192 114" fill="#fff" fontFamily='"Open Sans", sans-serif'>
        <text x="13" y="26" fontSize="21" fontWeight="700" textLength="140" lengthAdjust="spacingAndGlyphs">POWERED BY</text>
        <text x="5" y="99" fontSize="106" fontWeight="800" textLength="178" lengthAdjust="spacingAndGlyphs">esrı</text>
        <circle cx="170" cy="21" r="10" />
      </svg>
    </section>
  );
}

function Footer() {
  return (
    <footer className="mt-[52px] flex h-[174px] border-t border-black pl-[86px] pt-[40px] font-['Lato',sans-serif] text-[13.5px] leading-[21px] text-[#333333]">
      <div className="w-[433px]">
        <h2 className="text-[15.5px] font-bold leading-[24px] text-[#222222]"><Fit w={109}>QUICK LINKS</Fit></h2>
        <div className="mt-[19px]"><Fit w={52}>Contacts</Fit></div>
        <div><Fit w={75}>Quick Profile</Fit></div>
      </div>
      <div className="w-[865px]">
        <h2 className="text-[15.5px] font-bold leading-[24px] text-[#222222]"><Fit w={120}>RECENT NEWS</Fit></h2>
        <div className="mt-[19px]"><Fit w={226}>New look Croydon Observatory site live</Fit></div>
      </div>
      <div className="pt-px text-[#222222]">
        <div><Fit w={379}>© Croydon Council, 2017. Portions © Local Information Systems by</Fit></div>
        <div><Fit w={106}>Geowise Ltd 2017.</Fit></div>
      </div>
    </footer>
  );
}

export default function App() {
  return (
    <div className="flex h-[1080px] w-[1920px] overflow-hidden bg-white font-['Inter',sans-serif] font-normal">
      <div className="flex w-[1903px] flex-col">
        <Header />
        <Nav />
        <TitleBar />
        <main className="pl-[86px]">
          <MapHeader />
          <div className="flex">
            <aside className="flex w-[61px] flex-col pt-[7px]">
              <SideTab w={28} active icon={<FolderIcon />}>Data</SideTab>
              <SideTab w={36} icon={<MapIcon />}>Layers</SideTab>
              <SideTab w={44} icon={<EditIcon />}>Classify</SideTab>
              <SideTab w={33} icon={<TableIcon />}>Table</SideTab>
              <SideTab w={44} icon={<ListIcon />}>Legend</SideTab>
            </aside>
            <DataPanel />
            <MapPane />
          </div>
        </main>
        <Footer />
      </div>
      <div className="flex h-full w-[17px] flex-col items-center bg-[#f0f0f0]">
        <div className="flex h-[17px] items-center"><svg width="7" height="4" viewBox="0 0 7 4" fill="#a0a0a0"><path d="M0 4 3.5 0 7 4Z" /></svg></div>
        <div className="h-[1019px] w-[13px] bg-[#c1c1c1]" />
        <div className="mt-auto flex h-[17px] items-center"><svg width="7" height="4" viewBox="0 0 7 4" fill="#404040"><path d="M0 0 3.5 4 7 0Z" /></svg></div>
      </div>
    </div>
  );
}
